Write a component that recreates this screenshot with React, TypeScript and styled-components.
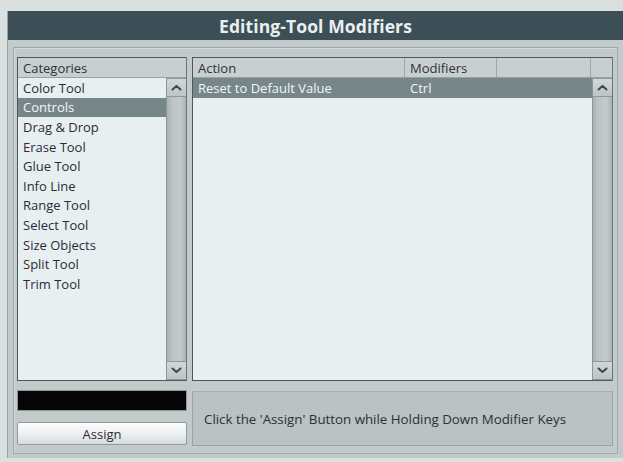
import { FC } from 'react';
import styled, { createGlobalStyle } from 'styled-components';

const GlobalStyle = createGlobalStyle`
  html, body {
    margin: 0;
    padding: 0;
    background: #dadfe0;
    overflow: hidden;
  }
  body {
    font-family: 'Open Sans', 'Liberation Sans', sans-serif;
    color: #2b2c36;
  }
`;

const Window = styled.div`
  margin: 11px 0 0 7px;
  width: 616px;
  height: 447px;
  display: flex;
  flex-direction: column;
  border-left: 1px solid #9aa3a4;
  box-sizing: border-box;
`;

const TitleBar = styled.div`
  height: 29px;
  flex: none;
  display: flex;
  align-items: center;
  justify-content: center;
  background: #3c4f56;
  color: #e9eff1;
  font-size: 17.5px;
  font-weight: 700;
  letter-spacing: 0.1px;
`;

const Body = styled.div`
  flex: 1;
  background: #c3cacb;
  padding: 7px 5px 4px 5px;
  box-sizing: border-box;
  display: flex;
`;

const Frame = styled.div`
  flex: 1;
  border: 1px solid #a3acad;
  border-top-color: #9ea7a8;
  box-shadow: inset 1px 1px 0 #d3d9da;
  padding: 9px 3px 6px 3px;
  display: grid;
  grid-template-columns: 170px 421px;
  grid-template-rows: 324px auto;
  column-gap: 5px;
  row-gap: 9px;
`;

const ListBox = styled.div`
  border: 1px solid #4d585c;
  border-right-color: #6c7679;
  background: #e8eff1;
  display: flex;
  flex-direction: column;
  overflow: hidden;
`;

const Header = styled.div`
  height: 19px;
  flex: none;
  display: flex;
  background: #c8cfd0;
  border-bottom: 1px solid #98a2a3;
  font-size: 13px;
  color: #2e323a;
`;

const HeaderCell = styled.div<{ $w?: number }>`
  ${p => (p.$w ? `width: ${p.$w}px; flex: none;` : 'flex: 1;')}
  box-sizing: border-box;
  padding-left: 5px;
  display: flex;
  align-items: center;
  border-right: 1px solid #a0a9aa;
  &:last-child {
    border-right: none;
  }
`;

const ListArea = styled.div`
  flex: 1;
  display: flex;
  min-height: 0;
`;

const Items = styled.div`
  flex: 1;
  display: flex;
  flex-direction: column;
`;

const Row = styled.div<{ $selected?: boolean }>`
  height: 19.6px;
  flex: none;
  display: flex;
  align-items: center;
  font-size: 13px;
  background: ${p => (p.$selected ? '#778689' : 'transparent')};
  color: ${p => (p.$selected ? '#f2f6f7' : '#2b2c36')};
`;

const Cell = styled.div<{ $w?: number }>`
  ${p => (p.$w ? `width: ${p.$w}px; flex: none;` : 'flex: 1;')}
  box-sizing: border-box;
  padding-left: 5px;
  white-space: nowrap;
`;

const ScrollBar = styled.div`
  width: 20px;
  flex: none;
  display: flex;
  flex-direction: column;
  background: linear-gradient(90deg, #aab2b3 0%, #bcc4c5 30%, #c4cbcc 70%, #a9b1b2 100%);
  border-left: 1px solid #8b9596;
  box-sizing: border-box;
`;

const Track = styled.div`
  flex: 1;
`;

const ArrowButton = styled.div`
  height: 19px;
  flex: none;
  display: flex;
  align-items: center;
  justify-content: center;
  background: linear-gradient(180deg, #d2d8d9, #bcc4c5);
  border-top: 1px solid #8f999a;
  border-bottom: 1px solid #8f999a;
  box-sizing: border-box;
`;

const Chevron: FC<{ down?: boolean }> = ({ down }) => (
  <svg width="11" height="7" viewBox="0 0 11 7">
    <path
      d={down ? 'M1.5 1.5 L5.5 5 L9.5 1.5' : 'M1.5 5.5 L5.5 2 L9.5 5.5'}
      fill="none"
      stroke="#3f474b"
      strokeWidth="2"
      strokeLinecap="round"
      strokeLinejoin="round"
    />
  </svg>
);

const Scroller: FC = () => (
  <ScrollBar>
    <ArrowButton>
      <Chevron />
    </ArrowButton>
    <Track />
    <ArrowButton>
      <Chevron down />
    </ArrowButton>
  </ScrollBar>
);

const LeftBottom = styled.div`
  display: flex;
  flex-direction: column;
  gap: 11px;
`;

const KeyDisplay = styled.div`
  height: 21px;
  background: #060606;
  border: 1px solid #8f9899;
  box-sizing: border-box;
`;

const AssignButton = styled.button`
  height: 23px;
  padding: 0;
  border: 1px solid #939c9d;
  border-radius: 2px;
  background: linear-gradient(180deg, #fbfcfc 0%, #eef1f1 50%, #d6dbdc 100%);
  font-family: inherit;
  font-size: 13px;
  color: #2b2c36;
  cursor: pointer;
`;

const Message = styled.div`
  margin-top: 1px;
  height: 55px;
  box-sizing: border-box;
  background: #bac2c3;
  border: 1px solid #9ba4a5;
  border-top-color: #a7b0b1;
  display: flex;
  align-items: center;
  padding-left: 11px;
  font-size: 13.3px;
  color: #2e2f39;
`;

const categories = [
  'Color Tool',
  'Controls',
  'Drag & Drop',
  'Erase Tool',
  'Glue Tool',
  'Info Line',
  'Range Tool',
  'Select Tool',
  'Size Objects',
  'Split Tool',
  'Trim Tool',
];

export default function App() {
  return (
    <>
      <GlobalStyle />
      <Window>
        <TitleBar>Editing-Tool Modifiers</TitleBar>
        <Body>
          <Frame>
            <ListBox>
              <Header>
                <HeaderCell>Categories</HeaderCell>
              </Header>
              <ListArea>
                <Items>
                  {categories.map(c => (
                    <Row key={c} $selected={c === 'Controls'}>
                      <Cell>{c}</Cell>
                    </Row>
                  ))}
                </Items>
                <Scroller />
              </ListArea>
            </ListBox>

            <ListBox>
              <Header>
                <HeaderCell $w={212}>Action</HeaderCell>
                <HeaderCell $w={92}>Modifiers</HeaderCell>
                <HeaderCell $w={94} />
                <HeaderCell />
              </Header>
              <ListArea>
                <Items>
                  <Row $selected>
                    <Cell $w={212}>Reset to Default Value</Cell>
                    <Cell>Ctrl</Cell>
                  </Row>
                </Items>
                <Scroller />
              </ListArea>
            </ListBox>

            <LeftBottom>
              <KeyDisplay />
              <AssignButton>Assign</AssignButton>
            </LeftBottom>

            <Message>Click the 'Assign' Button while Holding Down Modifier Keys</Message>
          </Frame>
        </Body>
      </Window>
    </>
  );
}
